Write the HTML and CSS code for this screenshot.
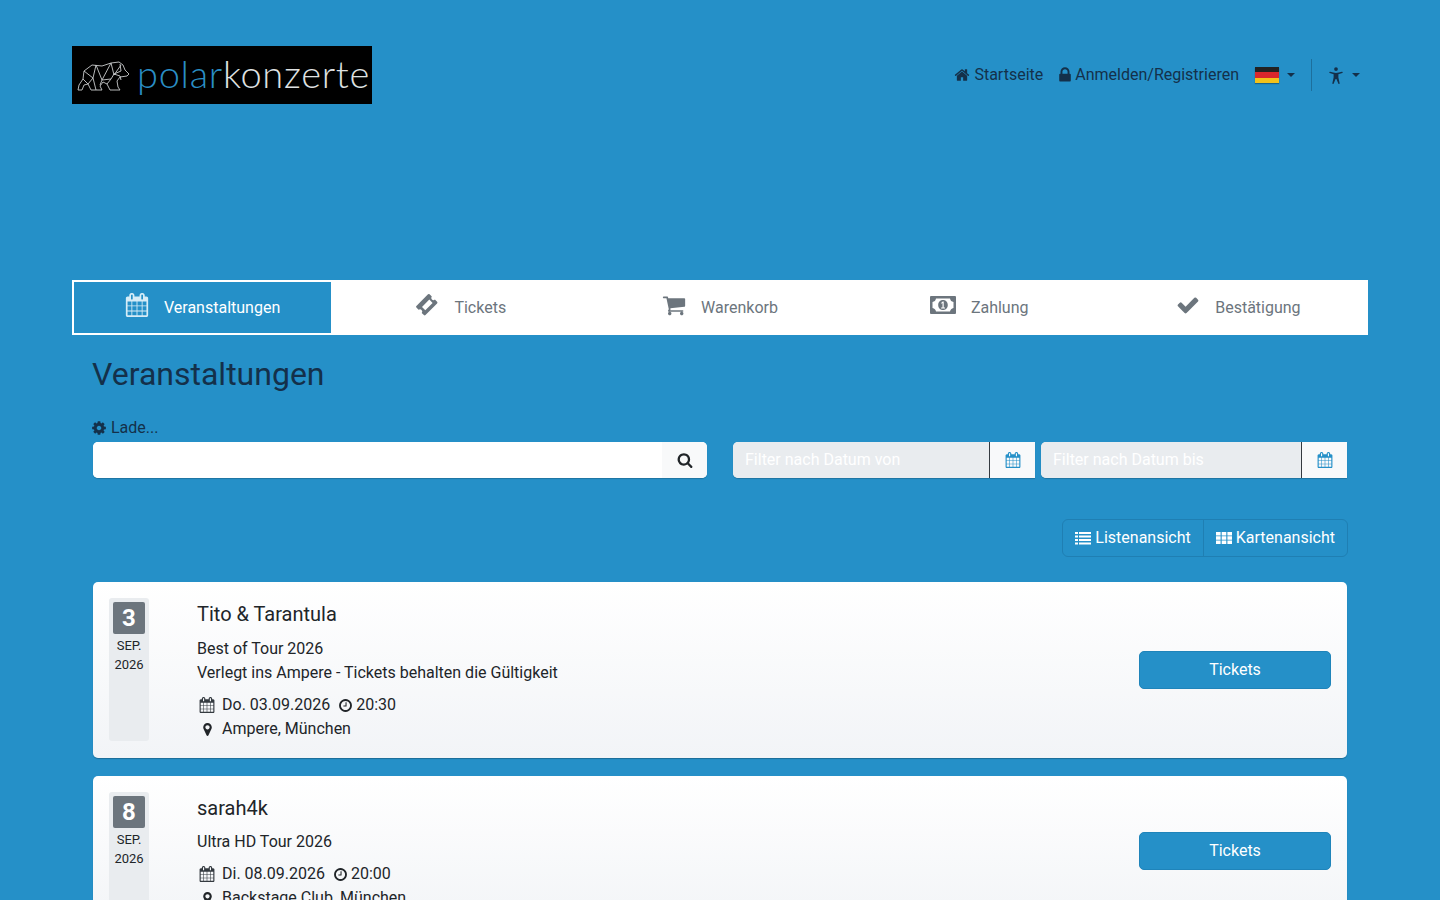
FILE: index.html
```html
<!DOCTYPE html>
<html lang="de">
<head>
<meta charset="utf-8">
<title>polarkonzerte</title>
<link rel="stylesheet" href="styles.css">
</head>
<body>
<svg class="defs" aria-hidden="true">
<symbol id="i-home" viewBox="0 0 1792 1792"><path d="M1472 992v480q0 26-19 45t-45 19h-384v-384h-256v384h-384q-26 0-45-19t-19-45v-480q0-1 .5-3t.5-3l575-474 575 474q1 2 1 6zm223-69l-62 74q-8 9-21 11h-3q-13 0-21-7l-692-577-692 577q-12 8-24 7-13-2-21-11l-62-74q-8-10-7-23.5t11-21.5l719-599q32-26 76-26t76 26l244 204v-195q0-14 9-23t23-9h192q14 0 23 9t9 23v408l219 182q10 8 11 21.5t-7 23.5z"/></symbol>
<symbol id="i-lock" viewBox="0 0 1792 1792"><path d="M640 768h512v-192q0-106-75-181t-181-75-181 75-75 181v192zm832 96v576q0 40-28 68t-68 28h-960q-40 0-68-28t-28-68v-576q0-40 28-68t68-28h32v-192q0-184 132-316t316-132 316 132 132 316v192h32q40 0 68 28t28 68z"/></symbol>
<symbol id="i-cal" viewBox="0 0 1792 1792"><path d="M192 1664h288v-288h-288v288zm352 0h320v-288h-320v288zm-352-352h288v-320h-288v320zm352 0h320v-320h-320v320zm-352-384h288v-288h-288v288zm736 736h320v-288h-320v288zm-384-736h320v-288h-320v288zm768 736h288v-288h-288v288zm-384-352h320v-320h-320v320zm-352-864v-288q0-13-9.5-22.5t-22.5-9.5h-64q-13 0-22.5 9.5t-9.5 22.5v288q0 13 9.5 22.5t22.5 9.5h64q13 0 22.5-9.5t9.5-22.5zm736 864h288v-320h-288v320zm-384-384h320v-288h-320v288zm384 0h288v-288h-288v288zm32-480v-288q0-13-9.5-22.5t-22.5-9.5h-64q-13 0-22.5 9.5t-9.5 22.5v288q0 13 9.5 22.5t22.5 9.5h64q13 0 22.5-9.5t9.5-22.5zm384-64v1280q0 52-38 90t-90 38h-1408q-52 0-90-38t-38-90v-1280q0-52 38-90t90-38h128v-96q0-66 47-113t113-47h64q66 0 113 47t47 113v96h384v-96q0-66 47-113t113-47h64q66 0 113 47t47 113v96h128q52 0 90 38t38 90z"/></symbol>
<symbol id="i-cart" viewBox="0 0 1792 1792"><path d="M704 1536q0 52-38 90t-90 38-90-38-38-90 38-90 90-38 90 38 38 90zm896 0q0 52-38 90t-90 38-90-38-38-90 38-90 90-38 90 38 38 90zm128-1088v512q0 24-16.5 42.5t-40.5 21.5l-1044 122q13 60 13 70 0 16-24 64h920q26 0 45 19t19 45-19 45-45 19h-1024q-26 0-45-19t-19-45q0-11 8-31.5t16-36 21.5-40 15.5-29.5l-177-823h-204q-26 0-45-19t-19-45 19-45 45-19h256q16 0 28.5 6.5t19.5 15.5 13 24.5 8 26 5.5 29.5 4.5 26h1201q26 0 45 19t19 45z"/></symbol>
<symbol id="i-check" viewBox="0 0 1792 1792"><path d="M1671 566q0 40-28 68l-724 724-136 136q-28 28-68 28t-68-28l-136-136-362-362q-28-28-28-68t28-68l136-136q28-28 68-28t68 28l294 295 656-657q28-28 68-28t68 28l136 136q28 28 28 68z"/></symbol>
<symbol id="i-cog" viewBox="0 0 1792 1792"><path d="M1152 896q0-106-75-181t-181-75-181 75-75 181 75 181 181 75 181-75 75-181zm512-109v222q0 12-8 23t-20 13l-185 28q-19 54-39 91 35 50 107 138 10 12 10 25t-9 23q-27 37-99 108t-94 71q-12 0-26-9l-138-108q-44 23-91 38-16 136-29 186-7 28-36 28h-222q-14 0-24.5-8.5t-11.5-21.5l-28-184q-49-16-90-37l-141 107q-10 9-25 9-14 0-25-11-126-114-165-168-7-10-7-23 0-12 8-23 15-21 51-66.5t54-70.5q-27-50-41-99l-183-27q-13-2-21-12.5t-8-23.5v-222q0-12 8-23t19-13l186-28q14-46 39-92-40-57-107-138-10-12-10-24 0-10 9-23 26-36 98.5-107.5t94.5-71.5q13 0 26 10l138 107q44-23 91-38 16-136 29-186 7-28 36-28h222q14 0 24.5 8.5t11.5 21.5l28 184q49 16 90 37l142-107q9-9 24-9 13 0 25 10 129 119 165 170 7 8 7 22 0 12-8 23-15 21-51 66.5t-54 70.5q26 50 41 98l183 28q13 2 21 12.5t8 23.5z"/></symbol>
<symbol id="i-search" viewBox="0 0 1792 1792"><path d="M1216 832q0-185-131.5-316.5t-316.5-131.5-316.5 131.5-131.5 316.5 131.5 316.5 316.5 131.5 316.5-131.5 131.5-316.5zm512 832q0 52-38 90t-90 38q-54 0-90-38l-343-342q-179 124-399 124-143 0-273.5-55.5t-225-150-150-225-55.5-273.5 55.5-273.5 150-225 225-150 273.5-55.5 273.5 55.5 225 150 150 225 55.5 273.5q0 220-124 399l343 343q37 37 37 90z"/></symbol>
<symbol id="i-pin" viewBox="0 0 1792 1792"><path d="M1152 640q0-106-75-181t-181-75-181 75-75 181 75 181 181 75 181-75 75-181zm256 0q0 109-33 179l-364 774q-16 33-47.5 52t-67.5 19-67.5-19-46.5-52l-365-774q-33-70-33-179 0-212 150-362t362-150 362 150 150 362z"/></symbol>
<symbol id="i-clock" viewBox="0 0 1792 1792"><path d="M1024 544v448q0 14-9 23t-23 9h-320q-14 0-23-9t-9-23v-64q0-14 9-23t23-9h224v-352q0-14 9-23t23-9h64q14 0 23 9t9 23zm416 352q0-148-73-273t-198-198-273-73-273 73-198 198-73 273 73 273 198 198 273 73 273-73 198-198 73-273zm224 0q0 209-103 385.500t-279.500 279.500-385.500 103-385.500-103-279.500-279.500-103-385.500 103-385.500 279.500-279.500 385.500-103 385.500 103 279.500 279.500 103 385.500z"/></symbol>
<symbol id="i-list" viewBox="0 0 16 14"><path d="M0 1h3v2H0zM4 1h12v2H4zM0 4.500h3v2H0zM4 4.500h12v2H4zM0 8h3v2H0zM4 8h12v2H4zM0 11.500h3v2H0zM4 11.500h12v2H4z"/></symbol>
<symbol id="i-th" viewBox="0 0 16 14"><path d="M0 1h4.600v3.500H0zM5.700 1h4.600v3.500H5.700zM11.400 1H16v3.500h-4.600zM0 5.300h4.600v3.500H0zM5.700 5.300h4.600v3.500H5.700zM11.400 5.300H16v3.500h-4.600zM0 9.600h4.600v3.500H0zM5.700 9.600h4.600v3.500H5.700zM11.400 9.600H16v3.500h-4.600z"/></symbol>
<symbol id="i-ticket" viewBox="0 0 24 24"><path fill-rule="evenodd" d="M14.600 1.300l2.200 2.200a2.200 2.200 0 0 0 3.100 3.100l2.200 2.200q.8.800 0 1.600L10.500 22.100q-.8.800-1.600 0l-2.200-2.200a2.200 2.200 0 0 0-3.100-3.100l-2.200-2.200q-.8-.8 0-1.600L13 1.300q.8-.8 1.600 0zM14.300 6.600L7 13.900l3.300 3.300 7.300-7.300z"/></symbol>
<symbol id="i-money" viewBox="0 0 26 18"><path fill-rule="evenodd" d="M1 0h24q1 0 1 1v16q0 1-1 1H1q-1 0-1-1V1q0-1 1-1zm5 2.500Q5.500 5.500 2.500 6v6q3 .5 3.500 3.500h14q.5-3 3.500-3.500V6q-3-.5-3.500-3.500zM13 4c3 0 4.800 2.300 4.800 5S16 14 13 14s-4.800-2.300-4.800-5S10 4 13 4zm-1.900 7.400v1h3.900v-1h-1.300V5.600h-1l-1.600 1.300.6.800.8-.6v4.300z"/></symbol>
<symbol id="i-access" viewBox="0 0 16 20"><circle cx="8" cy="2.400" r="2.200"/><path d="M1 5.700q-.7-.2-.9.500t.5.900l4.600 1.500v3.800L3.700 19q-.1.800.6 1t1-.5L7.500 14h1l2.200 5.500q.3.700 1 .5t.6-1l-1.500-6.600V8.600l4.600-1.500q.7-.2.500-.9t-.9-.5Q11 7 8 7T1 5.700z"/></symbol>
</svg>

<div class="page">
  <header class="topbar">
    <a class="logo">
      <svg class="bear" viewBox="0 0 52 30" fill="none" stroke="#c9cccd" stroke-width=".9" stroke-linejoin="round">
        <path d="M1 29l1-5 4-6 1-8 8-6 10 1 9-3 8-1 4 3 2 5 4 4-2 2-7 1-3 4 1 6 2 3H33l-3-6-4-2-3 4 2 4H14l-3-6-4 1-2 5z"/>
        <path d="M7 10l9 7 3-13 6 15 9-17 3 12 7-10M16 17l-5 6M16 17l3 12M25 19l-2 5M25 19l9-1 3-5M34 18l-4 5M37 13l6 2 1 4M6 18l5 5M43 3l1 7-7 3"/>
      </svg>
      <span class="logo-text"><span class="logo-blue">polar</span>konzerte</span>
    </a>
    <nav class="topnav">
      <a class="navlink"><svg class="ic ic-home"><use href="#i-home"/></svg>Startseite</a>
      <a class="navlink"><svg class="ic ic-lock"><use href="#i-lock"/></svg>Anmelden/Registrieren</a>
      <a class="navflag"><span class="flag"></span><span class="caret"></span></a>
      <span class="navsep"></span>
      <a class="navaccess"><svg class="ic-access"><use href="#i-access"/></svg><span class="caret"></span></a>
    </nav>
  </header>

  <ol class="steps">
    <li class="step step-active"><svg class="step-ic"><use href="#i-cal"/></svg><span>Veranstaltungen</span></li>
    <li class="step"><svg class="step-ic"><use href="#i-ticket"/></svg><span>Tickets</span></li>
    <li class="step"><svg class="step-ic"><use href="#i-cart"/></svg><span>Warenkorb</span></li>
    <li class="step"><svg class="step-ic step-ic-wide"><use href="#i-money"/></svg><span>Zahlung</span></li>
    <li class="step"><svg class="step-ic"><use href="#i-check"/></svg><span>Bestätigung</span></li>
  </ol>

  <main class="content">
    <h1 class="title">Veranstaltungen</h1>
    <div class="loading"><svg class="ic ic-cog"><use href="#i-cog"/></svg>Lade...</div>
    <div class="filters">
      <div class="searchbox">
        <input class="searchinput" type="text" aria-label="Suche">
        <span class="searchbtn"><svg class="ic-search"><use href="#i-search"/></svg></span>
      </div>
      <div class="dategroup dategroup-from">
        <input class="dateinput" type="text" placeholder="Filter nach Datum von" disabled>
        <span class="datebtn"><svg class="ic-date"><use href="#i-cal"/></svg></span>
      </div>
      <div class="dategroup dategroup-to">
        <input class="dateinput" type="text" placeholder="Filter nach Datum bis" disabled>
        <span class="datebtn"><svg class="ic-date"><use href="#i-cal"/></svg></span>
      </div>
    </div>
    <div class="viewswitch">
      <div class="btngroup">
        <a class="viewbtn"><svg class="ic-view"><use href="#i-list"/></svg>Listenansicht</a>
        <a class="viewbtn"><svg class="ic-view"><use href="#i-th"/></svg>Kartenansicht</a>
      </div>
    </div>

    <article class="event">
      <div class="datebox"><div class="day">3</div><div class="month">SEP.</div><div class="year">2026</div></div>
      <div class="info">
        <h2 class="name">Tito &amp; Tarantula</h2>
        <p class="sub">Best of Tour 2026</p>
        <p class="sub">Verlegt ins Ampere - Tickets behalten die Gültigkeit</p>
        <div class="meta"><svg class="ic-cal2"><use href="#i-cal"/></svg><span>Do. 03.09.2026</span><svg class="ic-clock"><use href="#i-clock"/></svg><span>20:30</span></div>
        <div class="place"><svg class="ic-pin"><use href="#i-pin"/></svg><span>Ampere, München</span></div>
      </div>
      <a class="ticketbtn">Tickets</a>
    </article>

    <article class="event">
      <div class="datebox"><div class="day">8</div><div class="month">SEP.</div><div class="year">2026</div></div>
      <div class="info">
        <h2 class="name">sarah4k</h2>
        <p class="sub">Ultra HD Tour 2026</p>
        <div class="meta"><svg class="ic-cal2"><use href="#i-cal"/></svg><span>Di. 08.09.2026</span><svg class="ic-clock"><use href="#i-clock"/></svg><span>20:00</span></div>
        <div class="place"><svg class="ic-pin"><use href="#i-pin"/></svg><span>Backstage Club, München</span></div>
      </div>
      <a class="ticketbtn">Tickets</a>
    </article>
  </main>
</div>
</body>
</html>
```

FILE: styles.css
```css
* { box-sizing: border-box; }
html, body { margin: 0; height: 900px; overflow: hidden; }
body {
  background: #2590c8;
  color: #212529;
  font-family: Roboto, sans-serif;
  font-size: 16px;
  line-height: 24px;
}
.defs { display: none; }
.page { padding: 46px 72px 0; }

.topbar { display: flex; justify-content: space-between; align-items: center; height: 58px; margin-bottom: 176px; }
.logo { width: 300px; height: 58px; background: #000; display: flex; align-items: center; padding-left: 5px; }
.bear { width: 52px; height: 30px; flex: none; margin-top: 1px; }
.logo-text { margin-left: 8px; font-family: Lato, sans-serif; font-weight: 300; font-size: 38px; line-height: 50px; color: #dfe1e2; white-space: nowrap; letter-spacing: .7px; margin-top: -4px; }
.logo-blue { color: #2a8ec4; }

.topnav { display: flex; align-items: center; color: #14304a; padding-right: 8px; }
.navlink { display: flex; align-items: center; gap: 4px; margin-right: 16px; }
.ic { fill: currentColor; flex: none; }
.ic-home { width: 16px; height: 16px; }
.ic-lock { width: 18px; height: 18px; margin: 0 -3px 0 -3px; }
.ic-cog { width: 16px; height: 16px; margin-left: -1px; }
.navflag { display: flex; align-items: center; gap: 8px; margin-right: 16px; }
.flag { width: 24px; height: 16px; display: block; background: linear-gradient(#222 0 33%, #d8262c 33% 66%, #f2c21a 66%); box-shadow: 0 1px 1px rgba(0,0,0,.3); }
.caret { width: 0; height: 0; border-top: 4px solid #14304a; border-left: 4px solid transparent; border-right: 4px solid transparent; display: block; }
.navsep { width: 1px; height: 32px; background: #1d6f9c; margin-right: 17px; }
.navaccess { display: flex; align-items: center; gap: 9px; }
.ic-access { width: 14px; height: 17px; fill: #14304a; }

.steps { list-style: none; margin: 0; padding: 0; display: grid; grid-template-columns: repeat(5, 1fr); height: 55px; background: #fff; color: #6c757d; }
.step { display: flex; align-items: center; justify-content: center; gap: 15px; }
.step span { margin-top: 1px; }
.step-active { background: #2590c8; color: #fff; border: 2px solid #fff; border-right: 0; }
.step-ic { width: 24px; height: 24px; fill: currentColor; margin-top: -5px; flex: none; }
.step-active .step-ic { fill: #d6ecf7; }
.step-ic-wide { width: 26px; height: 18px; }

.content { padding: 0 20px; }
.title { margin: 19px 0 0; font-size: 32px; line-height: 40px; font-weight: 400; color: #14304a; }
.loading { display: flex; align-items: center; gap: 4px; margin-top: 22px; height: 24px; color: #14304a; }
.filters { display: flex; align-items: stretch; height: 36px; margin: 2px 1px 0; }
.searchbox { width: 614px; display: flex; background: #fff; border-radius: 5px; overflow: hidden; box-shadow: 0 1px 1px rgba(0,0,0,.2); margin-right: 26px; }
.searchinput { flex: 1; border: 0; background: #fff; outline: none; padding: 0 12px; font: inherit; min-width: 0; }
.searchbtn { width: 45px; display: flex; align-items: center; justify-content: center; background: #f8f9fa; }
.ic-search { width: 16px; height: 16px; fill: #212529; }
.dategroup { display: flex; background: #e9ecef; border-radius: 5px 0 0 5px; overflow: hidden; box-shadow: 0 1px 1px rgba(0,0,0,.2); }
.dategroup-from { width: 302px; margin-right: 6px; }
.dategroup-to { width: 306px; }
.dateinput { flex: 1; min-width: 0; border: 0; background: #e9ecef; padding: 0 12px; font: inherit; color: #fff; }
.dateinput::placeholder { color: #fff; opacity: 1; }
.datebtn { width: 46px; display: flex; align-items: center; justify-content: center; background: #f8f9fa; border-left: 1px solid #343a40; }
.ic-date { width: 16px; height: 16px; fill: #2590c8; }

.viewswitch { display: flex; justify-content: flex-end; margin-top: 41px; }
.btngroup { display: flex; height: 38px; border: 1px solid #1f7fb3; border-radius: 6px; }
.viewbtn { display: flex; align-items: center; gap: 4px; color: #fff; padding: 0 12px; }
.viewbtn + .viewbtn { border-left: 1px solid #1f7fb3; }
.ic-view { width: 16px; height: 14px; fill: #fff; }

.event { display: flex; align-items: center; margin: 25px 1px 0; padding: 16px 16px 17px; background: linear-gradient(#fff, #f2f4f7); border-radius: 5px; box-shadow: 0 1px 1px rgba(0,0,0,.25); }
.event + .event { margin-top: 18px; }
.event + .event .name { margin-bottom: 6px; }
.datebox { align-self: stretch; width: 40px; flex: none; background: #e9ecef; border-radius: 3px; padding: 4px; text-align: center; font-size: 13px; line-height: 19px; }
.day { height: 32px; background: #6c757d; color: #fff; font-size: 24px; font-weight: 700; line-height: 32px; border-radius: 2px; margin-bottom: 2px; }
.info { flex: 1; margin-left: 48px; }
.name { margin: 0 0 7px; font-size: 20px; line-height: 32px; font-weight: 400; }
.sub { margin: 0; }
.meta { margin-top: 8px; display: flex; align-items: center; }
.place { display: flex; align-items: center; }
.ic-cal2 { width: 16px; height: 16px; fill: #343a40; margin: 0 7px 0 2px; }
.ic-clock { width: 15px; height: 15px; fill: #212529; margin: 0 3px 0 8px; }
.ic-pin { width: 15px; height: 15px; fill: #212529; margin: 0 7px 0 3px; }
.ticketbtn { width: 192px; height: 38px; flex: none; display: flex; align-items: center; justify-content: center; background: #2590c8; color: #fff; border-radius: 5px; border: 1px solid #1f84ba; }
```
